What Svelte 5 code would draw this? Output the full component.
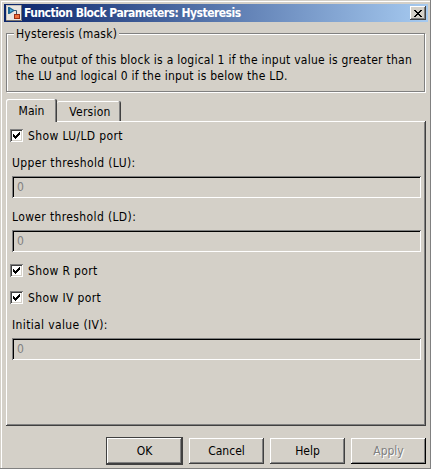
<script>
  let tab = $state('Main');
  const fields = [
    { check: 'Show LU/LD port' },
    { label: 'Upper threshold (LU):', value: '0' },
    { label: 'Lower threshold (LD):', value: '0' },
    { check: 'Show R port' },
    { check: 'Show IV port' },
    { label: 'Initial value (IV):', value: '0' }
  ];
</script>

<div class="window">
  <header>
    <svg class="logo" width="16" height="16" viewBox="0 0 16 16">
      <path fill="#e9e5e1" d="M0 0h16v16H0z" />
      <path fill="none" stroke="#c4c0ba" d="M.5 16V.5H16" />
      <path fill="none" stroke="#77736f" d="M0 15.5h15.5V0" />
      <path fill="none" stroke="#3d5568" d="M8 5.5h2.5V9" />
      <path fill="#1d6795" d="M2 2h1.5L9 5.5 3.5 9H2z" />
      <path fill="#4fb0dc" d="M4 4l3 1.5L4 7z" />
      <path fill="#9b2e12" d="M8 9h6v5H8z" />
      <path fill="#ee703d" d="M9 10h4v3H9z" />
    </svg>
    <h1>Function Block Parameters: Hysteresis</h1>
    <button class="close" aria-label="Close">
      <svg width="8" height="7" viewBox="0 0 8 7" shape-rendering="crispEdges">
        <path d="M0 0h2v1h1v1h2V1h1V0h2v1H7v1H6v1H5v1h1v1h1v1h1v1H6V6H5V5H3v1H2v1H0V6h1V5h1V4h1V3H2V2H1V1H0z" />
      </svg>
    </button>
  </header>

  <section class="group">
    <h2><span>Hysteresis (mask)</span></h2>
    <p>The output of this block is a logical 1 if the input value is greater than<br />the LU and logical 0 if the input is below the LD.</p>
  </section>

  <nav>
    <button class="tab" class:active={tab === 'Main'} onclick={() => (tab = 'Main')}>Main</button>
    <button class="tab version" class:active={tab === 'Version'} onclick={() => (tab = 'Version')}>Version</button>
  </nav>

  <main>
    {#each fields as f}
      {#if f.check}
        <div class="check">
          <i class="box">
            <svg width="7" height="7" viewBox="0 0 7 7" shape-rendering="crispEdges">
              <path d="M0 2h1v1h1v1h1V3h1V2h1V1h1V0h1v3H6v1H5v1H4v1H3v1H2V6H1V5H0z" />
            </svg>
          </i>
          <span>{f.check}</span>
        </div>
      {:else}
        <div class="field">
          <span>{f.label}</span>
          <div class="input">{f.value}</div>
        </div>
      {/if}
    {/each}
  </main>

  <footer>
    <div class="default"><button class="btn">OK</button></div>
    <button class="btn">Cancel</button>
    <button class="btn">Help</button>
    <button class="btn apply">Apply</button>
  </footer>
</div>

<style>
  .window {
    box-sizing: border-box;
    width: 431px;
    height: 469px;
    padding: 4px 3px 0 4px;
    background: #d4d0c8;
    box-shadow: inset -1px -1px #808080, inset 1px 1px #d4d0c8, inset 2px 2px #fff;
    font: 12px/16px "DejaVu Sans Condensed", "DejaVu Sans", sans-serif;
    font-stretch: condensed;
    color: #000;
    white-space: nowrap;
    overflow: hidden;
  }
  h1, h2, p { margin: 0; font-size: 12px; font-weight: normal; letter-spacing: 0.25px; }
  button { font: inherit; color: inherit; border: 0; padding: 0; margin: 0; background: #d4d0c8; }
  header {
    height: 18px;
    display: flex;
    align-items: center;
    padding: 0 2px;
    background: linear-gradient(90deg, #0a246a, #a6caf0);
  }
  h1 { margin-left: 2px; color: #fff; font-weight: bold; line-height: 18px; letter-spacing: -0.51px; }
  .close {
    width: 16px;
    height: 14px;
    margin-left: auto;
    display: flex;
    align-items: center;
    justify-content: center;
    box-shadow: inset -1px -1px #404040, inset 1px 1px #fff, inset -2px -2px #808080;
  }
  .group {
    box-sizing: border-box;
    width: 419px;
    height: 59px;
    margin: 11px 0 0 2px;
    padding: 0 9px;
    border: 1px solid #808080;
    box-shadow: 1px 1px #fff, inset 1px 1px #fff;
  }
  h2 { height: 16px; margin-top: -8px; }
  h2 span { display: inline-block; margin-left: -2px; padding: 0 2px; background: #d4d0c8; }
  p { margin-top: 10px; }
  nav { height: 23px; margin: 7px 0 0 2px; display: flex; align-items: flex-end; }
  .tab {
    width: 64px;
    height: 20px;
    margin-bottom: 1px;
    border-radius: 2px 2px 0 0;
    box-shadow: inset -1px 0 #404040, inset 1px 1px #fff, inset -2px 0 #808080;
  }
  .tab.active { width: 51px; height: 23px; margin-bottom: 0; position: relative; }
  .version { padding: 2px 0 0 2px; letter-spacing: 0.25px; }
  .version:not(.active) { box-shadow: inset -1px 0 #404040, inset 0 1px #fff, inset -2px 0 #808080; }
  main {
    box-sizing: border-box;
    width: 420px;
    height: 305px;
    margin: -1px 0 0 2px;
    padding: 8px 5px 0 4px;
    letter-spacing: 0.37px;
    box-shadow: inset -1px -1px #404040, inset 1px 1px #fff, inset -2px -2px #808080;
  }
  .check { height: 27px; display: flex; align-items: flex-start; }
  .check span { margin: -1px 0 0 5px; }
  .box {
    width: 13px;
    height: 13px;
    display: flex;
    align-items: center;
    justify-content: center;
    background: #fff;
    box-shadow: inset 1px 1px #808080, inset -1px -1px #fff, inset 2px 2px #404040, inset -2px -2px #d4d0c8;
  }
  .field { height: 54px; padding-left: 2px; }
  .field span { display: block; height: 20px; line-height: 14px; }
  .input {
    box-sizing: border-box;
    height: 22px;
    padding: 2px 5px;
    line-height: 19px;
    color: #808080;
    box-shadow: inset 1px 1px #808080, inset -1px -1px #fff, inset 2px 2px #000;
  }
  footer { display: flex; align-items: center; gap: 6px; margin: 10px 0 0 102px; height: 29px; }
  .default { width: 77px; height: 28px; box-sizing: border-box; padding: 1px; background: #404040; }
  .default .btn { width: 75px; height: 26px; }
  .btn { width: 75px; height: 26px; flex: none; box-shadow: inset -1px -1px #404040, inset 1px 1px #fff, inset -2px -2px #808080; }
  .apply { color: #808080; text-shadow: 1px 1px #fff; box-shadow: inset -1px -1px #000, inset 1px 1px #fff, inset -2px -2px #808080; }
</style>
